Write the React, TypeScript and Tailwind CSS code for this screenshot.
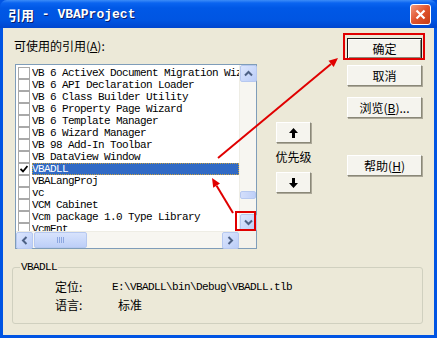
import React from "react"

const items = [
  "VB 6 ActiveX Document Migration Wizard",
  "VB 6 API Declaration Loader",
  "VB 6 Class Builder Utility",
  "VB 6 Property Page Wizard",
  "VB 6 Template Manager",
  "VB 6 Wizard Manager",
  "VB 98 Add-In Toolbar",
  "VB DataView Window",
  "VBADLL",
  "VBALangProj",
  "vc",
  "VCM Cabinet",
  "Vcm package 1.0 Type Library",
  "VcmEnt",
]

const cjk = "font-['SimSun','Noto_Sans_CJK_SC',sans-serif]"
const mono = "font-['Liberation_Mono','Noto_Sans_CJK_SC',monospace]"

// XP style scroll arrow button
function ScrollBtn({ dir }: { dir: "up" | "down" | "left" | "right" }) {
  const rot = { up: 0, down: 180, left: 270, right: 90 }[dir]
  return (
    <div className="w-[17px] h-[17px] shrink-0 rounded-[2px] border border-[#B6C8F0] bg-[linear-gradient(135deg,#DCE6FD,#BBCDF8)] flex items-center justify-center">
      <svg width="9" height="9" viewBox="0 0 9 9" style={{ transform: `rotate(${rot}deg)` }}>
        <path d="M1 6.5 L4.5 3 L8 6.5" fill="none" stroke="#4D6185" strokeWidth="2" />
      </svg>
    </div>
  )
}

function Button({ children, isDefault = false }: { children: React.ReactNode; isDefault?: boolean }) {
  return (
    <div
      className={`h-[21px] w-[75px] flex items-center justify-center text-[12px] leading-[12px] text-black bg-[#F5F4EE] ${cjk} ${
        isDefault
          ? "border border-[#1a1a1a] shadow-[inset_1px_1px_0_#fff,inset_-1px_-1px_0_#8a8878]"
          : "border border-t-[#FFFFFF] border-l-[#FFFFFF] border-r-[#8A8878] border-b-[#8A8878] shadow-[1px_1px_0_#ACA899]"
      }`}
    >
      {children}
    </div>
  )
}

function ArrowButton({ down = false }: { down?: boolean }) {
  return (
    <div className="h-[21px] w-[35px] flex items-center justify-center bg-[#F5F4EE] border border-t-white border-l-white border-r-[#8A8878] border-b-[#8A8878] shadow-[1px_1px_0_#ACA899]">
      <svg width="9" height="10" viewBox="0 0 9 10" style={{ transform: down ? "rotate(180deg)" : undefined }}>
        <path d="M4.5 0 L9 5 L6 5 L6 10 L3 10 L3 5 L0 5 Z" fill="#000" />
      </svg>
    </div>
  )
}

export default function App() {
  return (
    <div className="relative w-[437px] h-[338px] bg-[#0054E3] flex flex-col overflow-hidden">
      {/* Title bar */}
      <div className="h-[28px] shrink-0 flex items-center justify-between pl-[8px] pr-[6px] rounded-t-[7px] bg-[linear-gradient(to_bottom,#3C8CF8_0px,#0A64F0_3px,#0058E6_8px,#0055E2_20px,#0046CF_28px)]">
        <div className="flex items-center text-white text-[13px] font-bold leading-[13px] [text-shadow:1px_1px_0_#0A1E6E]">
          <span className={cjk}>引用</span>
          <span className={`${mono} whitespace-pre`}> - VBAProject</span>
        </div>
        <div className="w-[21px] h-[21px] rounded-[3px] border border-white bg-[linear-gradient(135deg,#F29A7E,#E0532C_50%,#C63C14)] flex items-center justify-center">
          <svg width="11" height="11" viewBox="0 0 11 11">
            <path d="M1.5 1.5 L9.5 9.5 M9.5 1.5 L1.5 9.5" stroke="#fff" strokeWidth="2.2" />
          </svg>
        </div>
      </div>

      {/* Body */}
      <div className="flex-1 mx-[3px] mb-[3px] bg-[#ECE9D8] flex flex-col">
        <div className="flex pt-[10px] pl-[12px]">
          {/* Reference list */}
          <div className="w-[242px] flex flex-col">
            <div className={`mt-[2px] -ml-[1px] h-[12px] leading-[12px] text-[12px] text-black ${cjk}`}>
              可使用的引用(<span className="underline">A</span>):
            </div>
            <div className="mt-[12px] h-[185px] border border-[#7F9DB9] bg-white grid grid-cols-[223px_17px] grid-rows-[166px_17px]">
              <div className="overflow-hidden pt-[2px] pl-[2px]">
                {items.map((name) => {
                  const sel = name === "VBADLL"
                  return (
                    <div key={name} className="h-[12px] flex items-center">
                      <div className="w-[12px] h-[12px] shrink-0 border border-[#A9A9A9] bg-white flex items-center justify-center">
                        {sel && (
                          <svg width="8" height="8" viewBox="0 0 8 8">
                            <path d="M0.5 4 L3 6.5 L7.5 1" fill="none" stroke="#000" strokeWidth="1.8" />
                          </svg>
                        )}
                      </div>
                      <div
                        className={`ml-[2px] flex-1 h-[12px] leading-[12px] whitespace-nowrap overflow-hidden text-[11px] tracking-[-0.6px] ${mono} ${
                          sel ? "bg-[#316AC5] text-white outline-1 outline-dotted outline-offset-[-1px] outline-[#C8A040]" : "text-black"
                        }`}
                      >
                        {name}
                      </div>
                    </div>
                  )
                })}
              </div>
              {/* vertical scrollbar */}
              <div className="flex flex-col bg-[#F7F6F1] border-l border-[#EEEDE5]">
                <ScrollBtn dir="up" />
                <div className="h-[109px]" />
                <div className="h-[8px] w-[16px] rounded-[2px] border border-[#B6C8F0] bg-[linear-gradient(to_right,#D3DEFB,#BFD0F8)]" />
                <div className="flex-1" />
                <ScrollBtn dir="down" />
              </div>
              {/* horizontal scrollbar */}
              <div className="flex bg-[#F7F6F1] border-t border-[#EEEDE5]">
                <ScrollBtn dir="left" />
                <div className="ml-[1px] w-[53px] h-[16px] rounded-[2px] border border-[#B6C8F0] bg-[linear-gradient(to_bottom,#D8E3FC,#BDCFF8)] flex items-center justify-center gap-[1px]">
                  <div className="w-[1px] h-[6px] bg-[#8CA6E0]" />
                  <div className="w-[1px] h-[6px] bg-[#8CA6E0]" />
                  <div className="w-[1px] h-[6px] bg-[#8CA6E0]" />
                  <div className="w-[1px] h-[6px] bg-[#8CA6E0]" />
                </div>
                <div className="flex-1" />
                <ScrollBtn dir="right" />
              </div>
              <div className="bg-[#F3F1EA]" />
            </div>
          </div>

          {/* Priority */}
          <div className="ml-[19px] w-[35px] flex flex-col items-center">
            <div className="mt-[84px]">
              <ArrowButton />
            </div>
            <div className={`mt-[8px] h-[12px] leading-[12px] text-[12px] text-black whitespace-nowrap ${cjk}`}>优先级</div>
            <div className="mt-[9px]">
              <ArrowButton down />
            </div>
          </div>

          {/* Buttons */}
          <div className="ml-[36px] flex flex-col">
            <Button isDefault>确定</Button>
            <div className="mt-[6px]">
              <Button>取消</Button>
            </div>
            <div className="mt-[11px]">
              <Button>
                浏览(<span className="underline">B</span>)...
              </Button>
            </div>
            <div className="mt-[37px]">
              <Button>
                帮助(<span className="underline">H</span>)
              </Button>
            </div>
          </div>
        </div>

        {/* Group box */}
        <fieldset className="mt-[12px] ml-[9px] w-[411px] h-[63px] border border-[#D0D0BF] rounded-[3px]">
          <legend className={`ml-[7px] px-[1px] h-[12px] leading-[12px] text-[11px] tracking-[-0.6px] text-black ${mono}`}>VBADLL</legend>
          <div className="pt-[8px] pl-[42px] grid grid-cols-[57px_1fr] gap-y-[6px] text-[12px] leading-[12px] text-black">
            <div className={cjk}>定位:</div>
            <div className={`${mono} text-[11px] tracking-[-0.6px]`}>E:\VBADLL\bin\Debug\VBADLL.tlb</div>
            <div className={cjk}>语言:</div>
            <div className={`${cjk} ml-[6px]`}>标准</div>
          </div>
        </fieldset>
      </div>

      {/* Red annotations */}
      <svg className="absolute inset-0 pointer-events-none" width="437" height="338" viewBox="0 0 437 338">
        <rect x="344" y="34" width="80" height="25" fill="none" stroke="#E00000" strokeWidth="2" />
        <rect x="236" y="212" width="19" height="18" fill="none" stroke="#E00000" strokeWidth="2" />
        <line x1="218" y1="158" x2="331" y2="64" stroke="#E00000" strokeWidth="2" />
        <polygon points="338,58 333.7,66.9 328.5,60.7" fill="#E00000" />
        <line x1="233" y1="213" x2="216.6" y2="185.7" stroke="#E00000" strokeWidth="2" />
        <polygon points="212,178 220,183.6 213.2,187.8" fill="#E00000" />
      </svg>
    </div>
  )
}
